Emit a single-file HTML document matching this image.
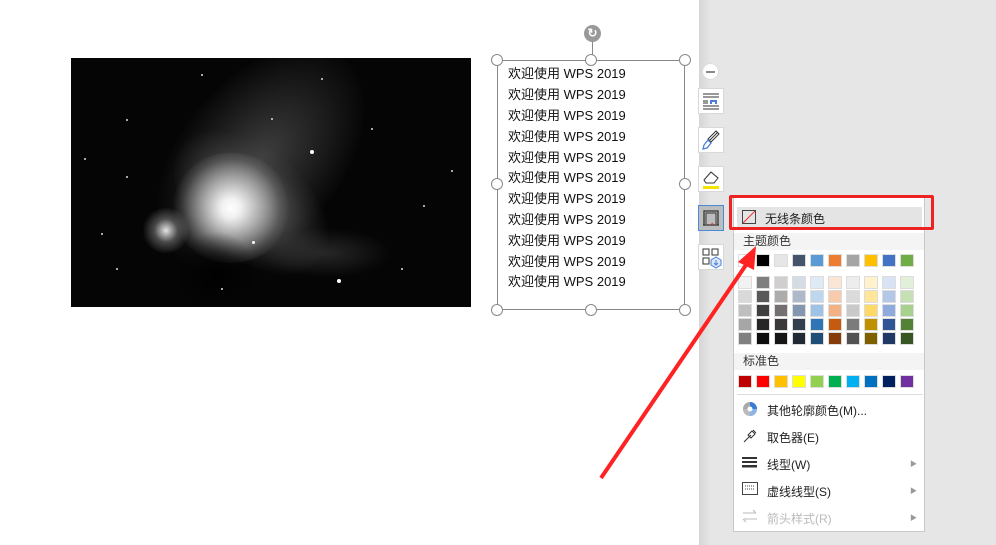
<!DOCTYPE html>
<html><head><meta charset="utf-8"><style>
*{margin:0;padding:0;box-sizing:border-box}
body{width:996px;height:545px;position:relative;overflow:hidden;background:#fff;font-family:"Liberation Sans","Noto Sans CJK SC",sans-serif}
.a{position:absolute}
#img{left:71px;top:58px;width:400px;height:249px;background:#050505;overflow:hidden}
.neb{position:absolute;border-radius:50%}
.st{position:absolute;width:2px;height:2px;background:#ddd;border-radius:50%}
#tb{left:497px;top:60px;width:188px;height:250px;border:1px solid #888}
.h{position:absolute;width:12px;height:12px;border:1px solid #888;border-radius:50%;background:#fff}
.ln{position:absolute;left:508px;font-size:13px;color:#111;line-height:16px}
#side{left:699px;top:0;width:297px;height:545px;background:linear-gradient(90deg,#d6d6d6,#e6e6e6 12px,#e6e6e6)}
.btn{position:absolute;left:698px;width:26px;height:26px;background:#fff;border:1px solid #d8d8d8}
#menu{left:733px;top:197px;width:192px;height:335px;background:#fff;border:1px solid #c8c8c8}
.sec{position:absolute;left:0;width:190px;height:17px;background:#f4f4f4;font-size:12px;color:#333;padding-left:9px;line-height:17px}
.sw{position:absolute;width:14px;height:13px;border:1px solid #ddd}
.mi{position:absolute;left:33px;font-size:12px;color:#222}
.ar{position:absolute;left:176px;font-size:7px;color:#999}
</style></head><body>
<div id="img" class="a">
<div class="neb" style="left:60px;top:20px;width:260px;height:160px;transform:rotate(-50deg);background:radial-gradient(ellipse,rgba(110,110,110,.55),rgba(50,50,50,.3) 55%,transparent 72%)"></div>
<div class="neb" style="left:90px;top:90px;width:180px;height:110px;transform:rotate(40deg);background:radial-gradient(ellipse,rgba(160,160,160,.6),rgba(70,70,70,.3) 55%,transparent 72%)"></div>
<div class="neb" style="left:100px;top:95px;width:120px;height:110px;background:radial-gradient(circle,#fff 0,#f0f0f0 12%,rgba(210,210,210,.8) 30%,rgba(120,120,120,.35) 60%,transparent 72%)"></div>
<div class="neb" style="left:70px;top:150px;width:50px;height:45px;background:radial-gradient(circle,rgba(240,240,240,.95) 0,rgba(140,140,140,.5) 35%,transparent 70%)"></div>
<div class="neb" style="left:100px;top:170px;width:90px;height:90px;transform:rotate(40deg);background:radial-gradient(ellipse,rgba(0,0,0,.85),transparent 65%)"></div>
<div class="neb" style="left:190px;top:170px;width:130px;height:50px;background:radial-gradient(ellipse,rgba(80,80,80,.45),transparent 70%)"></div>
<div class="st" style="left:13px;top:100px"></div><div class="st" style="left:55px;top:118px"></div><div class="st" style="left:239px;top:92px;width:4px;height:4px;background:#fff"></div><div class="st" style="left:266px;top:221px;width:4px;height:4px;background:#fff"></div><div class="st" style="left:30px;top:175px"></div><div class="st" style="left:300px;top:70px"></div><div class="st" style="left:352px;top:147px"></div><div class="st" style="left:380px;top:112px"></div><div class="st" style="left:130px;top:16px"></div><div class="st" style="left:200px;top:60px"></div><div class="st" style="left:55px;top:61px"></div><div class="st" style="left:330px;top:210px"></div><div class="st" style="left:150px;top:230px"></div><div class="st" style="left:250px;top:20px"></div><div class="st" style="left:45px;top:210px"></div><div class="st" style="left:181px;top:183px;width:3px;height:3px;background:#fff"></div>
</div>
<div class="a" style="left:584px;top:25px;width:17px;height:17px;border-radius:50%;background:#999;color:#fff;font-size:12px;text-align:center;line-height:17px;font-weight:bold">↻</div>
<div class="a" style="left:592px;top:42px;width:1px;height:18px;background:#888"></div>
<div id="tb" class="a"></div>
<div class="h" style="left:491px;top:54px"></div><div class="h" style="left:585px;top:54px"></div><div class="h" style="left:679px;top:54px"></div>
<div class="h" style="left:491px;top:178px"></div><div class="h" style="left:679px;top:178px"></div>
<div class="h" style="left:491px;top:304px"></div><div class="h" style="left:585px;top:304px"></div><div class="h" style="left:679px;top:304px"></div>
<div class="ln" style="top:66px">欢迎使用 WPS 2019</div><div class="ln" style="top:87px">欢迎使用 WPS 2019</div><div class="ln" style="top:108px">欢迎使用 WPS 2019</div><div class="ln" style="top:129px">欢迎使用 WPS 2019</div><div class="ln" style="top:150px">欢迎使用 WPS 2019</div><div class="ln" style="top:170px">欢迎使用 WPS 2019</div><div class="ln" style="top:191px">欢迎使用 WPS 2019</div><div class="ln" style="top:212px">欢迎使用 WPS 2019</div><div class="ln" style="top:233px">欢迎使用 WPS 2019</div><div class="ln" style="top:254px">欢迎使用 WPS 2019</div><div class="ln" style="top:274px">欢迎使用 WPS 2019</div>
<div id="side" class="a"></div>
<div class="a" style="left:702px;top:63px;width:17px;height:17px;border-radius:50%;background:#fff;border:1px solid #ddd"><div style="position:absolute;left:3px;top:7px;width:9px;height:2px;background:#888"></div></div>
<div class="btn" style="top:88px"><svg width="24" height="24"><path d="M4 5h16M4 8h16M4 17h16M4 20h16M4 12h5M4 14h5" stroke="#333"/><path d="M11 11h7v4h-2v-2h-3v2h-2z" fill="#4a7fd8"/></svg></div>
<div class="btn" style="top:127px"><svg width="24" height="24"><path d="M19 4l-9 9M17 3l3 3-8 8-3-3z" stroke="#333" fill="none"/><path d="M9 12l3 3-4 5-4 1 1-4z" fill="none" stroke="#4a7fd8" stroke-width="1.3"/></svg></div>
<div class="btn" style="top:166px"><svg width="24" height="24"><path d="M5 13l7-8 7 6-4 5H7z" fill="none" stroke="#333"/><rect x="4" y="19" width="16" height="3" fill="#f2e500"/></svg></div>
<div class="btn" style="top:205px;background:#bdbdbd;border-color:#4a8ad8"><svg width="24" height="24"><path d="M5 19V5h14v14M4 19h16" stroke="#333" fill="none" stroke-width="1.3"/><path d="M7 18V7h10v11" stroke="#333" fill="none"/><path d="M11 19l3-2" stroke="#e33"/></svg></div>
<div class="btn" style="top:244px"><svg width="24" height="24"><rect x="4" y="4" width="6" height="6" fill="none" stroke="#333"/><rect x="13" y="4" width="6" height="6" fill="none" stroke="#333"/><rect x="4" y="13" width="6" height="6" fill="none" stroke="#333"/><path d="M17 12l5 3v5l-5 3-5-3v-5z" fill="#dbe7fa" stroke="#4a7fd8"/><path d="M17 15v5M15 18l2 2 2-2" stroke="#4a7fd8" fill="none"/></svg></div>
<div id="menu" class="a">
<div class="a" style="left:3px;top:9px;width:185px;height:20px;background:#e4e4e4"></div>
<div class="a" style="left:8px;top:12px;width:14px;height:14px;border:1px solid #444"><svg width="12" height="12" style="position:absolute;left:0;top:0"><path d="M0 12L12 0" stroke="#e33"/></svg></div>
<div class="a" style="left:31px;top:12px;font-size:12px;color:#222">无线条颜色</div>
<div class="sec" style="top:35px">主题颜色</div>
<div class="sec" style="top:155px">标准色</div>
<div class="a" style="left:3px;top:196px;width:186px;height:1px;background:#ddd"></div>
<svg class="a" style="left:8px;top:203px" width="16" height="16"><circle cx="8" cy="8" r="7" fill="#aaa"/><path d="M8 1A7 7 0 0 1 15 8H8z" fill="#3a7bd5"/><path d="M8 15A7 7 0 0 1 1 8H8z" fill="#bbb"/><path d="M15 8A7 7 0 0 1 8 15V8z" fill="#8ab4ea"/><circle cx="8" cy="8" r="2.5" fill="#fff"/></svg>
<div class="mi" style="top:204px">其他轮廓颜色(M)...</div>
<svg class="a" style="left:8px;top:230px" width="16" height="16"><path d="M2 14l7-7M10 3l3 3-4 4-3-3zM11 2l3 3" stroke="#333" fill="none"/></svg>
<div class="mi" style="top:231px">取色器(E)</div>
<svg class="a" style="left:8px;top:258px" width="16" height="12"><rect x="0" y="1" width="15" height="2" fill="#333"/><rect x="0" y="5" width="15" height="2" fill="#333"/><rect x="0" y="9" width="15" height="2.5" fill="#333"/></svg>
<div class="mi" style="top:258px">线型(W)</div><div class="ar" style="top:261px">▶</div>
<svg class="a" style="left:8px;top:284px" width="16" height="14"><rect x=".5" y=".5" width="15" height="12" fill="none" stroke="#444"/><path d="M3 4h10M3 7h10" stroke="#444" stroke-dasharray="1 1"/></svg>
<div class="mi" style="top:285px">虚线线型(S)</div><div class="ar" style="top:288px">▶</div>
<svg class="a" style="left:8px;top:311px" width="16" height="14"><path d="M1 4h13M11 1l3 3M15 10H2M4 13l-3-3" stroke="#bbb" fill="none"/></svg>
<div class="mi" style="top:312px;color:#bbb">箭头样式(R)</div><div class="ar" style="top:315px">▶</div>
</div>
<div class="a" style="left:729px;top:195px;width:205px;height:35px;border:3px solid #ee2222;border-radius:2px"></div>
<div class="a" style="left:738px;top:254px">
<div class="sw" style="left:0;background:#fff"></div><div class="sw" style="left:18px;background:#000"></div><div class="sw" style="left:36px;background:#e7e6e6"></div><div class="sw" style="left:54px;background:#44546a"></div><div class="sw" style="left:72px;background:#5b9bd5"></div><div class="sw" style="left:90px;background:#ed7d31"></div><div class="sw" style="left:108px;background:#a5a5a5"></div><div class="sw" style="left:126px;background:#ffc000"></div><div class="sw" style="left:144px;background:#4472c4"></div><div class="sw" style="left:162px;background:#70ad47"></div>
</div>
<div class="a" style="left:738px;top:276px">
<div class="sw" style="left:0;top:0;background:#f2f2f2"></div><div class="sw" style="left:0;top:14px;background:#d9d9d9"></div><div class="sw" style="left:0;top:28px;background:#bfbfbf"></div><div class="sw" style="left:0;top:42px;background:#a6a6a6"></div><div class="sw" style="left:0;top:56px;background:#808080"></div>
<div class="sw" style="left:18px;top:0;background:#7f7f7f"></div><div class="sw" style="left:18px;top:14px;background:#595959"></div><div class="sw" style="left:18px;top:28px;background:#3f3f3f"></div><div class="sw" style="left:18px;top:42px;background:#262626"></div><div class="sw" style="left:18px;top:56px;background:#0d0d0d"></div>
<div class="sw" style="left:36px;top:0;background:#d0cece"></div><div class="sw" style="left:36px;top:14px;background:#aeabab"></div><div class="sw" style="left:36px;top:28px;background:#757070"></div><div class="sw" style="left:36px;top:42px;background:#3a3838"></div><div class="sw" style="left:36px;top:56px;background:#171616"></div>
<div class="sw" style="left:54px;top:0;background:#d6dce4"></div><div class="sw" style="left:54px;top:14px;background:#adb9ca"></div><div class="sw" style="left:54px;top:28px;background:#8497b0"></div><div class="sw" style="left:54px;top:42px;background:#323f4f"></div><div class="sw" style="left:54px;top:56px;background:#222a35"></div>
<div class="sw" style="left:72px;top:0;background:#deebf6"></div><div class="sw" style="left:72px;top:14px;background:#bdd7ee"></div><div class="sw" style="left:72px;top:28px;background:#9dc3e6"></div><div class="sw" style="left:72px;top:42px;background:#2e75b5"></div><div class="sw" style="left:72px;top:56px;background:#1f4e79"></div>
<div class="sw" style="left:90px;top:0;background:#fbe5d5"></div><div class="sw" style="left:90px;top:14px;background:#f8cbad"></div><div class="sw" style="left:90px;top:28px;background:#f4b183"></div><div class="sw" style="left:90px;top:42px;background:#c55a11"></div><div class="sw" style="left:90px;top:56px;background:#843c0b"></div>
<div class="sw" style="left:108px;top:0;background:#ededed"></div><div class="sw" style="left:108px;top:14px;background:#dbdbdb"></div><div class="sw" style="left:108px;top:28px;background:#c9c9c9"></div><div class="sw" style="left:108px;top:42px;background:#7b7b7b"></div><div class="sw" style="left:108px;top:56px;background:#525252"></div>
<div class="sw" style="left:126px;top:0;background:#fff2cc"></div><div class="sw" style="left:126px;top:14px;background:#ffe699"></div><div class="sw" style="left:126px;top:28px;background:#ffd966"></div><div class="sw" style="left:126px;top:42px;background:#bf9000"></div><div class="sw" style="left:126px;top:56px;background:#7f6000"></div>
<div class="sw" style="left:144px;top:0;background:#dae3f3"></div><div class="sw" style="left:144px;top:14px;background:#b4c7e7"></div><div class="sw" style="left:144px;top:28px;background:#8faadc"></div><div class="sw" style="left:144px;top:42px;background:#2f5597"></div><div class="sw" style="left:144px;top:56px;background:#203864"></div>
<div class="sw" style="left:162px;top:0;background:#e2f0d9"></div><div class="sw" style="left:162px;top:14px;background:#c5e0b4"></div><div class="sw" style="left:162px;top:28px;background:#a9d18e"></div><div class="sw" style="left:162px;top:42px;background:#548235"></div><div class="sw" style="left:162px;top:56px;background:#375623"></div>
</div>
<div class="a" style="left:738px;top:375px">
<div class="sw" style="left:0;background:#c00000"></div><div class="sw" style="left:18px;background:#f00"></div><div class="sw" style="left:36px;background:#ffc000"></div><div class="sw" style="left:54px;background:#ff0"></div><div class="sw" style="left:72px;background:#92d050"></div><div class="sw" style="left:90px;background:#00b050"></div><div class="sw" style="left:108px;background:#00b0f0"></div><div class="sw" style="left:126px;background:#0070c0"></div><div class="sw" style="left:144px;background:#002060"></div><div class="sw" style="left:162px;background:#7030a0"></div>
</div>
<svg class="a" style="left:0;top:0" width="996" height="545"><path d="M601 478L748 262" stroke="#f22" stroke-width="4"/><path d="M756 246L738 262L754 270Z" fill="#f22"/></svg>
</body></html>
